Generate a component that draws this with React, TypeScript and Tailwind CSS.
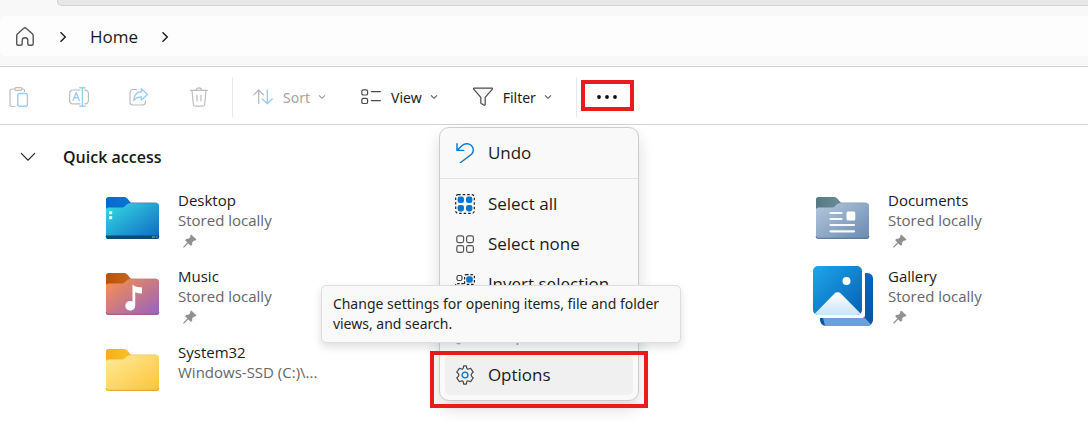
import type { ReactNode } from "react";

const GREY = "#bdbdbd";
const PALE = "#9fcdf0";
const INK = "#4a4a4a";
const BLUE = "#0078d4";

function Icon({ children, size = 20 }: { children: ReactNode; size?: number }) {
  return (
    <svg width={size} height={size} viewBox={`0 0 ${size} ${size}`} fill="none" strokeLinecap="round" strokeLinejoin="round" strokeWidth="1.2" className="shrink-0" aria-hidden="true">
      {children}
    </svg>
  );
}

function HomeIcon() {
  return (
    <Icon>
      <path d="M1.7 8.7c0-.8.3-1.5.9-2L8.8 1.3c.7-.6 1.6-.6 2.3 0l6.2 5.4c.6.5.9 1.2.9 2v8.1c0 .9-.7 1.5-1.5 1.5h-2.4c-.8 0-1.5-.6-1.5-1.5v-3.5c0-1.6-1-2.5-2.8-2.5s-2.8.9-2.8 2.5v3.5c0 .9-.7 1.5-1.5 1.5H3.2c-.8 0-1.5-.6-1.5-1.5z" stroke="#555" strokeWidth="1.4" />
    </Icon>
  );
}

function ChevronRight() {
  return (
    <svg width="8" height="12" viewBox="0 0 8 12" fill="none" stroke="#1a1a1a" strokeWidth="1.4" aria-hidden="true">
      <path d="M1.5 1.2 6.3 6 1.5 10.8" />
    </svg>
  );
}

function ChevronDown({ color }: { color: string }) {
  return (
    <svg width="8" height="6" viewBox="0 0 8 6" fill="none" stroke={color} strokeWidth="1.1" aria-hidden="true">
      <path d="M1 1.3 4 4.3 7 1.3" />
    </svg>
  );
}

function PasteIcon() {
  return (
    <Icon>
      <path d="M6 2H3a2 2 0 0 0-2 2v13.5a2 2 0 0 0 2 2h3M13 2h1.5a1 1 0 0 1 1 1v1.5" stroke={GREY} />
      <rect x="6" y="0.7" width="7" height="2.6" rx="1.3" stroke={GREY} />
      <rect x="8.8" y="6.5" width="9.6" height="12.8" rx="1.8" stroke={PALE} strokeWidth="1.4" />
    </Icon>
  );
}

function RenameIcon() {
  return (
    <Icon>
      <path d="M11 3H4a3.4 3.4 0 0 0-3.4 3.4v7A3.4 3.4 0 0 0 4 16.8h7M16 3.2a3.4 3.4 0 0 1 3.4 3.3v7a3.4 3.4 0 0 1-3.4 3.3" stroke={GREY} />
      <path d="M13.4 1v18M10.8.8h5.2M10.8 19.2h5.2M4 13.4 7.2 5.6l3.2 7.8M5 10.8h4.4" stroke={PALE} strokeWidth="1.4" />
    </Icon>
  );
}

function ShareIcon() {
  return (
    <Icon>
      <path d="M7.5 2.5H4A3 3 0 0 0 1 5.5V15a3 3 0 0 0 3 3h9.500a3 3 0 0 0 3-3v-.8" stroke={GREY} />
      <path d="M12.4 1.8 18.6 7.4l-6.2 5.7V10c-3.6 0-6 .9-7.8 3.5C5 8.8 7.6 5.2 12.4 4.8z" stroke={PALE} strokeWidth="1.4" />
    </Icon>
  );
}

function DeleteIcon() {
  return (
    <Icon>
      <path d="M1.5 3.3h17M7.4 3.2a2.6 2.3 0 0 1 5.2 0M3 3.5l1.3 13.8a2 2 0 0 0 2 1.8h7.4a2 2 0 0 0 2-1.8L17 3.5M8 8v6M12 8v6" stroke={GREY} />
    </Icon>
  );
}

function SortIcon() {
  return (
    <Icon>
      <path d="M5.7 16.5V3M.8 7.9 5.7 3l4.9 4.9" stroke="#b5b5b5" />
      <path d="M14.3 3v13.7M9.4 12l4.9 4.8 4.9-4.8" stroke={PALE} strokeWidth="1.4" />
    </Icon>
  );
}

function ViewIcon() {
  return (
    <Icon>
      <rect x=".8" y="2.8" width="5.8" height="5.2" rx="1.6" stroke={INK} />
      <rect x=".8" y="11.3" width="5.8" height="5.2" rx="1.6" stroke={INK} />
      <path d="M10.4 4.6h9M10.4 13.6h9" stroke={INK} />
    </Icon>
  );
}

function FilterIcon() {
  return (
    <Icon>
      <path d="M1 1.2h18c.6 0 .7.6.4 1l-7.2 8.2v7c0 .8-.8 1.1-1.4.7l-2.6-1.7a1 1 0 0 1-.4-.9v-5.1L.6 2.2c-.3-.4-.2-1 .4-1z" fill="#f6f6f6" stroke={INK} />
    </Icon>
  );
}

function UndoIcon() {
  return (
    <Icon>
      <path d="M2 .8v6.600h6.800M2.200 7.200 6.600 3c2.700-2.600 6.700-3 9.500-.7 2.800 2.400 2.900 6.400.4 8.900L5 20" stroke={BLUE} strokeWidth="1.400" strokeLinejoin="miter" />
    </Icon>
  );
}

function SelectAllIcon() {
  return (
    <Icon>
      <rect x=".7" y=".7" width="18.600" height="18.600" rx="2.500" stroke="#222" strokeDasharray="2.500 2" strokeLinecap="butt" />
      {[5.8, 14.2].map((x) => [5.8, 14.2].map((y) => <rect key={`${x}-${y}`} x={x - 3.2} y={y - 3.2} width="6.400" height="6.400" rx="2.300" fill={BLUE} />))}
    </Icon>
  );
}

function SelectNoneIcon() {
  return (
    <Icon>
      {[1.8, 11.6].map((x) => [1.8, 11.6].map((y) => <rect key={`${x}-${y}`} x={x} y={y} width="6.800" height="6.800" rx="1.800" stroke="#555" />))}
    </Icon>
  );
}

function InvertIcon() {
  return (
    <Icon>
      <rect x="2" y="1.500" width="5" height="5" rx="1.500" stroke="#444" />
      <rect x="12.500" y="12.500" width="5.500" height="5.500" rx="1.600" stroke="#444" />
      <rect x="9.600" y=".6" width="9.800" height="9.800" rx="1.500" stroke="#222" strokeDasharray="2.500 1.800" strokeLinecap="butt" />
      <rect x=".6" y="9.600" width="9" height="9.600" rx="1.500" stroke="#222" strokeDasharray="2.500 1.800" strokeLinecap="butt" />
      <rect x="11.200" y="2.200" width="6.600" height="6.600" rx="2.400" fill={BLUE} />
      <rect x="2" y="11.500" width="6" height="6" rx="2.400" fill={BLUE} />
    </Icon>
  );
}

function PropertiesIcon() {
  return (
    <Icon>
      <path d="M18.200 4.500 15 7.600 12.400 5l3.100-3.200A5 5 0 0 0 9.300 8.300L2 15.200a2 2 0 0 0 2.900 3l7-7.400A5 5 0 0 0 18.200 4.500z" stroke="#a8a8a8" />
    </Icon>
  );
}

function OptionsIcon() {
  return (
    <Icon>
      <path d="M8.300 2.900 8.700.9h2.600l.4 2c.2.900 1 1.400 1.900 1.100l2-.7 2.600 3.700-1.500 1.600c-.7.800-.7 2 0 2.800l1.500 1.600-2.600 3.700-2-.7c-.9-.3-1.700.2-1.900 1.100l-.4 2H8.700l-.4-2c-.2-.9-1-1.400-1.900-1.100l-2 .7L1.800 13l1.500-1.600c.7-.8.7-2 0-2.800L1.800 7l2.600-3.700 2 .7c.9.300 1.700-.2 1.900-1.100z" stroke="#444" />
      <circle cx="10" cy="10" r="2.900" stroke={BLUE} strokeWidth="1.400" />
    </Icon>
  );
}

function PinIcon() {
  return (
    <svg width="14" height="14" viewBox="0 0 14 14" className="ml-[5px] mt-1" role="img" aria-label="Pinned">
      <path d="M8.300.9 13.200 5.600 12 6.300 10.900 6.200 8.900 8.400 8.800 10.700 7.700 11.400 5.300 9 1.200 13.100.6 13.300.8 12.600 4.700 8.400 2.500 6.200 3.300 5.200 5.600 5.100 7.700 3 7.400 1.800z" fill="#909090" stroke="#777" strokeWidth=".5" />
    </svg>
  );
}

type FolderKind = "desktop" | "music" | "system" | "documents";
const folderColors: Record<FolderKind, { tab: string; tabEnd: string; from: string; to: string; edge: string }> = {
  desktop: { tab: "#0a68c8", tabEnd: "#0877d4", from: "#35d7e3", to: "#0f6cc4", edge: "#0b4a80" },
  music: { tab: "#b5530f", tabEnd: "#c9661b", from: "#f58f50", to: "#9a63bd", edge: "#a55b83" },
  system: { tab: "#f5b018", tabEnd: "#fbc02a", from: "#ffe896", to: "#fcc63a", edge: "#dda62e" },
  documents: { tab: "#547886", tabEnd: "#6d8d94", from: "#b2c4da", to: "#6c8db3", edge: "#577396" },
};

function FolderIcon({ kind }: { kind: FolderKind }) {
  const c = folderColors[kind];
  return (
    <svg width="60" height="60" viewBox="0 1 60 60" className="shrink-0" aria-hidden="true">
      <defs>
        <linearGradient id={`body-${kind}`} x1="0" y1="0" x2="1" y2="1">
          <stop offset="0.050" stopColor={c.from} />
          <stop offset="0.950" stopColor={c.to} />
        </linearGradient>
        <linearGradient id={`tab-${kind}`} x1="0" y1="0" x2="1" y2="0">
          <stop offset="0" stopColor={c.tab} />
          <stop offset="1" stopColor={c.tabEnd} />
        </linearGradient>
      </defs>
      <path d="M5.500 7H21c1.500 0 2.400.5 3.400 1.600L28 13v6H3V9.500A2.500 2.500 0 0 1 5.500 7z" fill={`url(#tab-${kind})`} />
      <path d="M5.500 17.500h13.200c1.300 0 2-.3 2.900-1.100l2.200-2c1-.9 1.800-1.400 3.200-1.400h26.500A2.500 2.500 0 0 1 56 15.500v31a2.500 2.500 0 0 1-2.500 2.500h-48A2.500 2.500 0 0 1 3 46.500V20a2.500 2.500 0 0 1 2.500-2.500z" fill={`url(#body-${kind})`} />
      <path d="M3 46.300A2.200 2.200 0 0 0 5.500 48.300h48A2.200 2.200 0 0 0 56 46.300" fill="none" stroke={c.edge} strokeWidth="1" />
      <path d="M24 13.600c1-.6 1.800-.9 3-.9h26.500" fill="none" stroke={c.edge} strokeWidth=".7" opacity=".6" />
      {kind === "desktop" && (
        <>
          <path d="M3 45.500h53v1a2.500 2.500 0 0 1-2.500 2.500h-48A2.500 2.500 0 0 1 3 46.500z" fill="#0a4978" />
          <path d="M49 47h3M53 47h1.500" stroke="#8db9d8" />
          <rect x="6" y="21" width="3.200" height="3.200" rx=".7" fill="#e5fbfc" />
          <rect x="6" y="26" width="3.200" height="3.200" rx=".7" fill="#e5fbfc" />
        </>
      )}
      {kind === "music" && (
        <path d="M29.500 18.500c2.200 2.600 5.800 2.700 9.500 2.900v6c-2.600 0-4.800-.3-6.800-1.200v13.600a5 4.800 0 1 1-2.700-4.300z" fill="#fff" />
      )}
      {kind === "documents" && (
        <>
          <path d="M17.500 23h11M17.500 29h11M17.500 35h23.500M17.500 41.300h23.500" stroke="#f7fafc" strokeWidth="2.200" strokeLinecap="round" />
          <rect x="33.500" y="21.500" width="8.800" height="9" rx="1.500" fill="#fff" />
        </>
      )}
    </svg>
  );
}

function GalleryIcon() {
  return (
    <svg width="60" height="60" viewBox="0 0 60 60" className="-mt-px shrink-0" aria-hidden="true">
      <defs>
        <linearGradient id="gal-front" x1="0" y1="0" x2="1" y2="1">
          <stop offset="0" stopColor="#1fa5e8" />
          <stop offset="1" stopColor="#0560b6" />
        </linearGradient>
        <linearGradient id="gal-back" x1="0" y1="0" x2="0" y2="1">
          <stop offset="0" stopColor="#0763bd" />
          <stop offset="1" stopColor="#0b559f" />
        </linearGradient>
        <linearGradient id="gal-hill" x1="0" y1="0" x2="0" y2="1">
          <stop offset="0" stopColor="#ffffff" />
          <stop offset="1" stopColor="#c9e4fa" />
        </linearGradient>
        <clipPath id="gal-clip">
          <rect width="49" height="49" rx="5" />
        </clipPath>
      </defs>
      <path d="M52 7h2.500A5.500 5.500 0 0 1 60 12.500V54a6 6 0 0 1-6 6H13a6 6 0 0 1-6-6v-2h42a3 3 0 0 0 3-3z" fill="url(#gal-back)" />
      <path d="M10 52h40a3 3 0 0 0 1.500-.5l6.500 7a6 6 0 0 1-4 1.500H13l-1-.3z" fill="#6d9fda" />
      <g clipPath="url(#gal-clip)">
        <rect width="49" height="49" fill="url(#gal-front)" />
        <path d="M1.500 48 21.500 27.500a4.500 4.500 0 0 1 6.300 0L48 48a5 5 0 0 1-3 1H5a5 5 0 0 1-3.500-1z" fill="url(#gal-hill)" />
      </g>
      <circle cx="33.500" cy="15" r="4" fill="#fff" />
    </svg>
  );
}

function ToolButton({ icon, label, disabled }: { icon: ReactNode; label: string; disabled?: boolean }) {
  return (
    <button type="button" disabled={disabled} className={`flex h-10 items-center gap-[10px] font-['Noto_Sans',sans-serif] text-[14px] ${disabled ? "text-[#a3a3a3]" : "text-[#1c1c1c]"}`}>
      {icon}
      <span className="flex items-center gap-2">
        {label}
        <ChevronDown color={disabled ? "#999" : "#555"} />
      </span>
    </button>
  );
}

function MenuItem({ icon, label, disabled, active, children }: { icon: ReactNode; label: string; disabled?: boolean; active?: boolean; children?: ReactNode }) {
  return (
    <button
      type="button"
      role="menuitem"
      disabled={disabled}
      className={`relative flex h-10 w-full items-center gap-[13px] rounded-[5px] pl-[10px] text-left text-[17px] ${active ? "bg-[#f0f0f0]" : ""} ${disabled ? "text-[#a0a0a0]" : "text-[#1b1b1b]"}`}
    >
      {icon}
      {label}
      {children}
    </button>
  );
}

function Place({ icon, name, detail, pinned, className = "" }: { icon: ReactNode; name: string; detail: string; pinned?: boolean; className?: string }) {
  return (
    <a href="#" className={`flex h-[60px] gap-[15px] text-[15px] leading-5 ${className}`}>
      {icon}
      <span className="-mt-px flex flex-col whitespace-nowrap">
        <span className="text-[#1a1a1a]">{name}</span>
        <span className="text-[#666]">{detail}</span>
        {pinned && <PinIcon />}
      </span>
    </a>
  );
}

export default function App() {
  return (
    <div className="min-h-screen overflow-hidden bg-white font-['Open_Sans','Noto_Sans',sans-serif]">
      <header className="border-b border-[#d3d3d3] bg-[#f8f8f8] pb-[10px]">
        <div className="ml-[57px] h-[6px] rounded-bl-[5px] border-b border-l border-[#d3d3d3] bg-[#e7e7e7]" />
        <nav aria-label="Breadcrumb" className="mt-[10px] flex h-10 items-center rounded-l-[5px] bg-[#fdfdfd] pl-[15px] pt-px">
          <a href="#" aria-label="Home folder"><HomeIcon /></a>
          <span className="ml-6"><ChevronRight /></span>
          <a href="#" className="mx-[23px] text-[17px] text-[#1a1a1a]">Home</a>
          <ChevronRight />
        </nav>
      </header>

      <div role="toolbar" aria-label="File commands" className="flex h-[58px] items-center border-b border-[#d3d3d3] pt-[3px]">
        <div className="flex gap-[22px]">
          {[
            { label: "Paste", icon: <PasteIcon /> },
            { label: "Rename", icon: <RenameIcon /> },
            { label: "Share", icon: <ShareIcon /> },
            { label: "Delete", icon: <DeleteIcon /> },
          ].map((b) => (
            <button key={b.label} type="button" disabled aria-label={b.label} className="grid h-10 w-[38px] place-items-center">
              {b.icon}
            </button>
          ))}
        </div>
        <div className="ml-[14px] flex h-10 items-center gap-[35px] border-x border-[#e8e8e8] pl-5 pr-6">
          <ToolButton icon={<SortIcon />} label="Sort" disabled />
          <ToolButton icon={<ViewIcon />} label="View" />
          <ToolButton icon={<FilterIcon />} label="Filter" />
        </div>
        <div className="relative ml-1">
          <button type="button" aria-label="See more" aria-haspopup="menu" aria-expanded="true" className="grid h-10 w-[53px] place-items-center">
            <svg width="20" height="4" viewBox="0 0 20 4" fill="#111" aria-hidden="true">
              <circle cx="2" cy="2" r="1.900" />
              <circle cx="10" cy="2" r="1.900" />
              <circle cx="18" cy="2" r="1.900" />
            </svg>
          </button>
          <span className="pointer-events-none absolute inset-x-0 bottom-[6px] top-[3px] border-4 border-[#e81c1c]" />

          <div role="menu" className="absolute -right-[5px] top-[50px] z-10 w-[200px] rounded-[10px] border border-[#cdcdcd] bg-[#f9f9f9] py-[5px] shadow-[0_8px_16px_rgba(0,0,0,0.14)]">
            <div className="px-[5px]">
              <MenuItem icon={<UndoIcon />} label="Undo" />
            </div>
            <div className="my-[5px] h-px bg-[#e2e2e2]" />
            <div className="px-[5px]">
              <MenuItem icon={<SelectAllIcon />} label="Select all" />
              <MenuItem icon={<SelectNoneIcon />} label="Select none" />
              <MenuItem icon={<InvertIcon />} label="Invert selection" />
            </div>
            <div className="my-[5px] h-px bg-[#e2e2e2]" />
            <div className="px-[5px]">
              <MenuItem icon={<PropertiesIcon />} label="Properties" disabled />
              <MenuItem icon={<OptionsIcon />} label="Options" active>
                <span className="pointer-events-none absolute -inset-x-[15px] -bottom-[13px] -top-1 border-4 border-[#e81c1c]" />
                <span role="tooltip" className="absolute -left-[124px] bottom-[52px] w-[360px] rounded-[5px] border border-[#dedede] bg-[#f9f9f9] px-[11px] py-2 font-['Noto_Sans',sans-serif] text-[14px] leading-5 text-[#1f1f1f] shadow-[0_4px_8px_rgba(0,0,0,0.13)]">
                  Change settings for opening items, file and folder views, and search.
                </span>
              </MenuItem>
            </div>
          </div>
        </div>
      </div>

      <main className="pt-5">
        <h2>
          <button type="button" aria-expanded="true" className="flex h-6 items-center gap-[27px] pl-5 text-[16px] font-semibold text-[#191919]">
            <svg width="16" height="10" viewBox="0 0 16 10" fill="none" stroke="#222" strokeWidth="1.200" aria-hidden="true">
              <path d="M1 1.200 8 8.200 15 1.200" />
            </svg>
            Quick access
          </button>
        </h2>
        <div className="mt-[22px] grid grid-cols-[355px_355px_1fr] gap-y-4 pl-[103px]">
          <Place icon={<FolderIcon kind="desktop" />} name="Desktop" detail="Stored locally" pinned className="col-start-1" />
          <Place icon={<FolderIcon kind="documents" />} name="Documents" detail="Stored locally" pinned className="col-start-3" />
          <Place icon={<FolderIcon kind="music" />} name="Music" detail="Stored locally" pinned className="col-start-1" />
          <Place icon={<GalleryIcon />} name="Gallery" detail="Stored locally" pinned className="col-start-3" />
          <Place icon={<FolderIcon kind="system" />} name="System32" detail="Windows-SSD (C:)\..." className="col-start-1" />
        </div>
      </main>
    </div>
  );
}
